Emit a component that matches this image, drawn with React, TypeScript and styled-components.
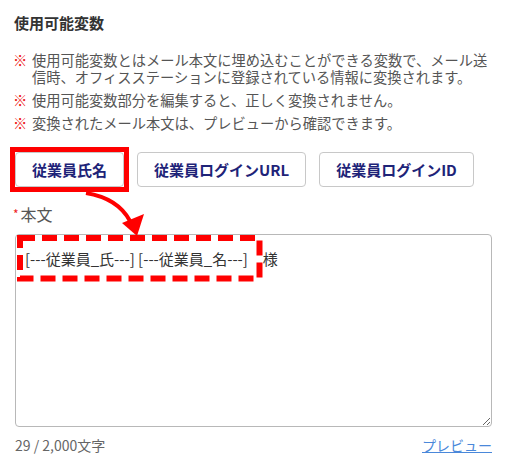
import React from "react";
import styled, { createGlobalStyle } from "styled-components";

const GlobalStyle = createGlobalStyle`
  html, body { margin: 0; padding: 0; background: #fff; }
  body { font-family: "Noto Sans CJK JP", "Noto Sans", sans-serif; }
  * { box-sizing: border-box; }
`;

const Page = styled.div`
  position: relative;
  width: 506px;
  height: 471px;
  padding: 13px 14px 0 15px;
  overflow: hidden;
`;

const Title = styled.h2`
  margin: 0;
  font-size: 15px;
  line-height: 20px;
  font-weight: 700;
  color: #333;
  margin-left: -1px;
`;

const NoteList = styled.ul`
  list-style: none;
  margin: 18px 0 0 -2px;
  padding: 0;
`;

const NoteItem = styled.li`
  display: flex;
  font-size: 14.25px;
  line-height: 17px;
  color: #555;
  & + & { margin-top: 6px; }
`;

const Mark = styled.span`
  flex: 0 0 19px;
  color: #ee1111;
`;

const NoteText = styled.span`
  flex: 1;
`;

const ButtonRow = styled.div`
  display: flex;
  gap: 13px;
  margin-top: 21px;
`;

const VarButton = styled.button<{ $highlight?: boolean }>`
  position: relative;
  height: 35px;
  padding: 0 16px;
  border: 1px solid #c8c8c8;
  border-radius: 4px;
  background: #fff;
  font-family: "Noto Sans CJK JP", "Noto Sans", sans-serif;
  font-size: 15px;
  font-weight: 700;
  line-height: 20px;
  color: #1e2378;
  cursor: pointer;
  &::after {
    content: "";
    display: ${(p) => (p.$highlight ? "block" : "none")};
    position: absolute;
    inset: -6px;
    border: 5px solid #ff0000;
  }
`;

const FieldLabel = styled.div`
  margin-top: 17px;
  font-size: 16px;
  line-height: 20px;
  color: #555;
  margin-left: -2px;
`;

const Required = styled.span`
  color: #ee2222;
  font-size: 12px;
  vertical-align: top;
  margin-right: 2px;
`;

const BodyArea = styled.textarea`
  display: block;
  width: 477px;
  height: 193px;
  margin-top: 10px;
  padding: 14px 9px;
  border: 1px solid #b8b8b8;
  border-radius: 4px;
  font-family: "Noto Sans CJK JP", "Noto Sans", sans-serif;
  font-size: 15px;
  line-height: 20px;
  color: #333;
  resize: both;
  outline: none;
`;

const Footer = styled.div`
  display: flex;
  justify-content: space-between;
  width: 477px;
  margin-top: 9px;
  font-size: 14px;
  line-height: 18px;
`;

const Counter = styled.span`
  color: #666;
`;

const PreviewLink = styled.a`
  color: #4a88da;
  text-decoration: underline;
`;

const Overlay = styled.svg`
  position: absolute;
  top: 0;
  left: 0;
  pointer-events: none;
`;

export default function App() {
  const value = "[---従業員_氏---] [---従業員_名---]　様";
  return (
    <>
      <GlobalStyle />
      <Page>
        <Title>使用可能変数</Title>
        <NoteList>
          <NoteItem>
            <Mark>※</Mark>
            <NoteText>
              使用可能変数とはメール本文に埋め込むことができる変数で、メール送信時、オフィスステーションに登録されている情報に変換されます。
            </NoteText>
          </NoteItem>
          <NoteItem>
            <Mark>※</Mark>
            <NoteText>使用可能変数部分を編集すると、正しく変換されません。</NoteText>
          </NoteItem>
          <NoteItem>
            <Mark>※</Mark>
            <NoteText>変換されたメール本文は、プレビューから確認できます。</NoteText>
          </NoteItem>
        </NoteList>
        <ButtonRow>
          <VarButton $highlight>従業員氏名</VarButton>
          <VarButton>従業員ログインURL</VarButton>
          <VarButton>従業員ログインID</VarButton>
        </ButtonRow>
        <FieldLabel>
          <Required>*</Required>本文
        </FieldLabel>
        <BodyArea defaultValue={value} />
        <Footer>
          <Counter>29 / 2,000文字</Counter>
          <PreviewLink href="#">プレビュー</PreviewLink>
        </Footer>
        <Overlay width="506" height="471" viewBox="0 0 506 471">
          <rect
            x="20"
            y="238"
            width="239.5"
            height="40.5"
            fill="none"
            stroke="#ff0000"
            strokeWidth="6"
            strokeDasharray="15 7"
          />
          <path
            d="M 86 193 C 104 196, 121 204, 130 221"
            fill="none"
            stroke="#ff0000"
            strokeWidth="4"
          />
          <polygon points="137,236 122,223 144,214" fill="#ff0000" />
        </Overlay>
      </Page>
    </>
  );
}
